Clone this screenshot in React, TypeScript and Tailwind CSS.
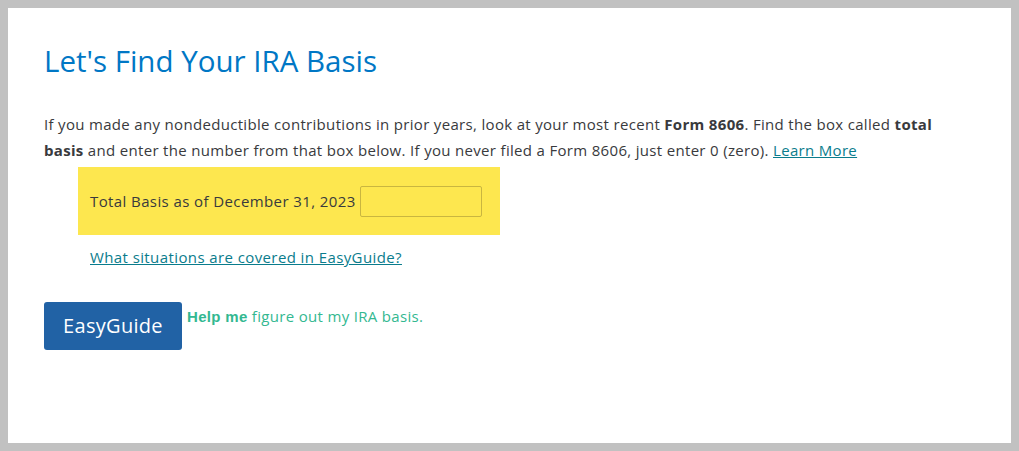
import React from "react";

export default function App() {
  return (
    <div className="w-[1019px] h-[451px] bg-[#c1c1c1] pt-[8px] pl-[8px]" style={{ fontFamily: "'Open Sans', 'Noto Sans', sans-serif" }}>
      <div className="w-[1003px] h-[435px] bg-white pl-[36px] pt-[33px] tracking-[0.32px]">
        <h1 className="text-[29.5px] leading-[40px] text-[#0077c5] font-normal tracking-normal">Let's Find Your IRA Basis</h1>
        <p className="mt-[30px] w-[930px] text-[15px] leading-[26px] text-[#393a3d]">
          If you made any nondeductible contributions in prior years, look at your most recent <b>Form 8606</b>. Find the box called <b>total</b>
          <br />
          <b>basis</b> and enter the number from that box below. If you never filed a Form 8606, just enter 0 (zero).{" "}
          <a href="#" className="text-[#0a7c8c] underline">Learn More</a>
        </p>
        <div className="ml-[34px] mt-[4px] w-[422px] h-[68px] bg-[#fde74f] flex items-center pl-[12px] pt-[1px]">
          <span className="text-[15px] text-[#393a3d] tracking-[0.4px]">Total Basis as of December 31, 2023</span>
          <input type="text" className="ml-[4px] w-[122px] h-[31px] border border-[#c9b640] rounded-[2px] bg-transparent" />
        </div>
        <div className="ml-[46px] mt-[10px]">
          <a href="#" className="text-[15px] leading-[24px] text-[#0a7c8c] underline tracking-[0.4px]">What situations are covered in EasyGuide?</a>
        </div>
        <div className="mt-[33px] flex items-start">
          <button className="w-[138px] h-[48px] bg-[#2162a5] rounded-[3px] text-white text-[20px] tracking-[0.3px]">EasyGuide</button>
          <span className="ml-[5px] mt-[3px] text-[15px] text-[#33b891]">
            <b style={{ fontFamily: "'Liberation Sans', Arial, sans-serif" }}>Help me</b> figure out my IRA basis.
          </span>
        </div>
      </div>
    </div>
  );
}
